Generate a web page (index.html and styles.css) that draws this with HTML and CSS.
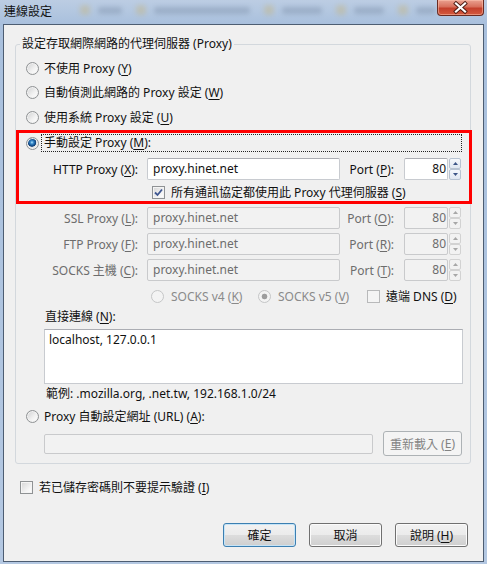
FILE: index.html
```html
<!DOCTYPE html>
<html lang="zh-Hant">

<head>
    <meta charset="UTF-8">
    <meta name="viewport" content="width=device-width, initial-scale=1.0">
    <link rel="stylesheet" href="styles.css">
    <title>連線設定</title>
</head>

<body>
    <div class="window">
        <div class="titlebar">
            <span class="title">連線設定</span>
            <span class="glass">
                <span class="blob icon"></span><span class="blob w1"></span>
                <span class="blob icon"></span><span class="blob w2"></span>
                <span class="blob icon"></span><span class="blob w3"></span>
                <span class="blob icon"></span><span class="blob w4"></span>
                <span class="blob icon"></span><span class="blob w5"></span>
            </span>
            <span class="close">
                <svg width="45" height="15" viewBox="0 0 45 15">
                    <path d="M18 3.5 L27 11.5 M27 3.5 L18 11.5" stroke="#4a1a12" stroke-width="4" stroke-linecap="square" />
                    <path d="M18 3.5 L27 11.5 M27 3.5 L18 11.5" stroke="#ffffff" stroke-width="2.2" stroke-linecap="square" />
                </svg>
            </span>
        </div>

        <div class="client">
            <fieldset class="group">
                <legend>設定存取網際網路的代理伺服器 (Proxy)</legend>

                <div class="opt"><span class="radio"></span><span>不使用 Proxy (<u>Y</u>)</span></div>
                <div class="opt"><span class="radio"></span><span>自動偵測此網路的 Proxy 設定 (<u>W</u>)</span></div>
                <div class="opt third"><span class="radio"></span><span>使用系統 Proxy 設定 (<u>U</u>)</span></div>

                <div class="highlight">
                    <div class="opt manual"><span class="radio checked"></span><span class="focus">手動設定 Proxy (<u>M</u>):</span></div>
                    <div class="proxy-row">
                        <span class="lbl">HTTP Proxy (<u>X</u>):</span>
                        <span class="field">proxy.hinet.net</span>
                        <span class="lbl">Port (<u>P</u>):</span>
                        <span class="spin">
                            <span class="field num">80</span>
                            <span class="arrows">
                                <span class="arrow"><svg width="5" height="3"><path d="M0 3 L2.5 0 L5 3 Z" fill="#3b5587" /></svg></span>
                                <span class="arrow"><svg width="5" height="3"><path d="M0 0 L5 0 L2.5 3 Z" fill="#3b5587" /></svg></span>
                            </span>
                        </span>
                    </div>
                    <div class="check-row share">
                        <span class="check">
                            <svg width="11" height="11" viewBox="0 0 11 11"><path d="M2 5.5 L4.5 8 L9 2.5" fill="none" stroke="#3e5690" stroke-width="1.8" /></svg>
                        </span>
                        <span>所有通訊協定都使用此 Proxy 代理伺服器 (<u>S</u>)</span>
                    </div>
                </div>

                <div class="proxy-row disabled first">
                    <span class="lbl">SSL Proxy (<u>L</u>):</span>
                    <span class="field">proxy.hinet.net</span>
                    <span class="lbl">Port (<u>O</u>):</span>
                    <span class="spin">
                        <span class="field num">80</span>
                        <span class="arrows">
                            <span class="arrow"><svg width="5" height="3"><path d="M0 3 L2.5 0 L5 3 Z" fill="#a7a7a7" /></svg></span>
                            <span class="arrow"><svg width="5" height="3"><path d="M0 0 L5 0 L2.5 3 Z" fill="#a7a7a7" /></svg></span>
                        </span>
                    </span>
                </div>
                <div class="proxy-row disabled">
                    <span class="lbl">FTP Proxy (<u>F</u>):</span>
                    <span class="field">proxy.hinet.net</span>
                    <span class="lbl">Port (<u>R</u>):</span>
                    <span class="spin">
                        <span class="field num">80</span>
                        <span class="arrows">
                            <span class="arrow"><svg width="5" height="3"><path d="M0 3 L2.5 0 L5 3 Z" fill="#a7a7a7" /></svg></span>
                            <span class="arrow"><svg width="5" height="3"><path d="M0 0 L5 0 L2.5 3 Z" fill="#a7a7a7" /></svg></span>
                        </span>
                    </span>
                </div>
                <div class="proxy-row disabled">
                    <span class="lbl">SOCKS 主機 (<u>C</u>):</span>
                    <span class="field">proxy.hinet.net</span>
                    <span class="lbl">Port (<u>T</u>):</span>
                    <span class="spin">
                        <span class="field num">80</span>
                        <span class="arrows">
                            <span class="arrow"><svg width="5" height="3"><path d="M0 3 L2.5 0 L5 3 Z" fill="#a7a7a7" /></svg></span>
                            <span class="arrow"><svg width="5" height="3"><path d="M0 0 L5 0 L2.5 3 Z" fill="#a7a7a7" /></svg></span>
                        </span>
                    </span>
                </div>

                <div class="socks-row">
                    <span class="sock-opt v4"><span class="radio off"></span><span>SOCKS v4 (<u>K</u>)</span></span>
                    <span class="sock-opt v5"><span class="radio off on"></span><span>SOCKS v5 (<u>V</u>)</span></span>
                    <span class="sock-opt dns"><span class="check off"></span><span>遠端 DNS (<u>D</u>)</span></span>
                </div>

                <div class="direct-label">直接連線 (<u>N</u>):</div>
                <div class="textarea">localhost, 127.0.0.1</div>
                <div class="hint">範例: .mozilla.org, .net.tw, 192.168.1.0/24</div>

                <div class="opt url-opt"><span class="radio"></span><span>Proxy 自動設定網址 (URL) (<u>A</u>):</span></div>
                <div class="url-row">
                    <span class="field url"></span>
                    <span class="btn off reload">重新載入 (<u>E</u>)</span>
                </div>
            </fieldset>

            <div class="check-row bottom-check">
                <span class="check"></span>
                <span>若已儲存密碼則不要提示驗證 (<u>I</u>)</span>
            </div>

            <div class="buttons">
                <span class="btn default">確定</span>
                <span class="btn">取消</span>
                <span class="btn">說明 (<u>H</u>)</span>
            </div>
        </div>
    </div>
</body>

</html>
```

FILE: styles.css
```css
body {
  margin: 0;
  width: 487px;
  height: 564px;
  overflow: hidden;
  background: linear-gradient(#bccde3, #a9c0dd 24px, #b4c8e2);
  font-family: "Noto Sans", "Noto Sans CJK TC", sans-serif;
  font-size: 12px;
  color: #111;
}

u {
  text-decoration-thickness: 1px;
  text-underline-offset: 2px;
}

.window {
  display: flex;
  flex-direction: column;
  height: 564px;
}

/* title bar */

.titlebar {
  height: 24px;
  display: flex;
  align-items: flex-start;
  flex: none;
}

.title {
  padding: 4px 0 0 4px;
  line-height: 16px;
}

.glass {
  flex: 1;
  display: flex;
  align-items: center;
  gap: 8px;
  height: 20px;
  padding-left: 22px;
  opacity: 0.35;
  filter: blur(2.5px);
}

.blob {
  height: 7px;
  border-radius: 3px;
  background: #6d7f99;
}

.blob.icon {
  width: 10px;
  height: 10px;
  background: #c9b06a;
  margin-left: 6px;
}

.w1 {
  width: 24px;
}

.w2 {
  width: 96px;
}

.w3 {
  width: 40px;
}

.w4 {
  width: 30px;
}

.w5 {
  width: 20px;
}

.close {
  flex: none;
  width: 45px;
  height: 15px;
  margin-right: 3px;
  border: 1px solid #6a2a20;
  border-top: 0;
  border-radius: 0 0 4px 4px;
  background: linear-gradient(#eaa190, #d8705c 45%, #c4402c 55%, #d45a3e);
  box-shadow: inset 0 0 0 1px rgba(255, 200, 180, 0.5);
}

.close svg {
  display: block;
}

/* client area */

.client {
  flex: 1;
  margin: 0 3px 2px;
  border: 1px solid #4d5d72;
  background: #f0f0f0;
  padding-top: 11px;
}

.group {
  margin: 0 0 0 11px;
  padding: 4px 0 7px;
  width: 456px;
  box-sizing: border-box;
  border: 1px solid #d3d8dd;
  border-radius: 3px;
  min-width: 0;
}

.group legend {
  margin-left: 4px;
  padding: 0 2px;
  line-height: 16px;
}

.opt {
  display: flex;
  align-items: center;
  height: 24px;
  padding-left: 10px;
}

.opt .radio {
  margin-right: 5px;
}

.third {
  margin-top: 1px;
}

/* radio & check */

.radio {
  flex: none;
  width: 13px;
  height: 13px;
  box-sizing: border-box;
  border-radius: 50%;
  border: 1px solid #8f9294;
  background: linear-gradient(135deg, #cfd0d1, #f3f3f3 60%, #ffffff);
  box-shadow: inset 0 0 0 1px #f2f2f2;
}

.radio.checked {
  background: radial-gradient(circle at 45% 40%, #b8e6fb 0, #3d8fcf 1.5px, #1a5a99 3px, #0e3f77 4px, #e4e4e4 4.6px, #f6f6f6);
}

.radio.off {
  border-color: #c5c6c7;
  background: #f3f3f3;
  box-shadow: none;
}

.radio.off.on {
  background: radial-gradient(circle, #9d9d9d 0, #9d9d9d 2.5px, #f3f3f3 3.2px);
}

.check {
  flex: none;
  width: 13px;
  height: 13px;
  box-sizing: border-box;
  border: 1px solid #8f9294;
  background: linear-gradient(135deg, #d5d5d5, #f6f6f6 70%, #ffffff);
  box-shadow: inset 0 0 0 1px #f4f4f4;
}

.check svg {
  display: block;
}

.check.off {
  border-color: #b8b9ba;
  background: #f4f4f4;
}

/* highlight box */

.highlight {
  margin-top: 1px;
  width: 456px;
  box-sizing: border-box;
  border: 3px solid #ff0000;
}

.manual {
  height: 20px;
  padding-left: 7px;
}

.manual .radio {
  margin-right: 2px;
}

.focus {
  flex: 1;
  height: 18px;
  box-sizing: border-box;
  margin-right: 7px;
  padding-left: 2px;
  border: 1px dotted #222;
  line-height: 16px;
}

/* proxy rows */

.proxy-row {
  display: grid;
  grid-template-columns: 131px 193px 64px 57px;
  align-items: center;
  height: 22px;
  margin-top: 4px;
}

.highlight .proxy-row {
  grid-template-columns: 128px 193px 64px 57px;
  margin-top: 5px;
}

.proxy-row.first {
  margin-top: 3px;
}

.lbl {
  text-align: right;
  padding-right: 9px;
  white-space: nowrap;
}

.proxy-row .lbl:nth-of-type(3) {
  padding-right: 10px;
}

.field {
  height: 22px;
  box-sizing: border-box;
  border: 1px solid #c8cbd0;
  border-top-color: #abadb3;
  border-radius: 2px;
  background: #fff;
  padding: 0 5px;
  line-height: 20px;
}

.spin {
  display: flex;
}

.num {
  width: 44px;
  text-align: right;
  padding-right: 1px;
}

.arrows {
  margin-left: 1px;
  width: 12px;
  display: flex;
  flex-direction: column;
}

.arrow {
  height: 11px;
  box-sizing: border-box;
  border: 1px solid #b7c3d2;
  border-radius: 2px;
  background: linear-gradient(#f5f8fc, #dfe7f1);
  display: flex;
  align-items: center;
  justify-content: center;
}

.arrow svg {
  display: block;
}

.disabled {
  color: #6d6d6d;
}

.disabled .field {
  background: #f2f2f2;
  border-color: #c9cacc;
  color: #6d6d6d;
}

.disabled .arrow {
  border-color: #d2d2d2;
  background: #f2f2f2;
}

.check-row {
  display: flex;
  align-items: center;
  height: 18px;
}

.check-row .check {
  margin-right: 6px;
}

.share {
  margin-top: 3px;
  padding-left: 133px;
}

/* socks */

.socks-row {
  display: flex;
  align-items: center;
  height: 22px;
  margin-top: 4px;
  padding-left: 135px;
  color: #8a8a8a;
}

.sock-opt {
  display: flex;
  align-items: center;
}

.sock-opt .radio {
  margin-right: 7px;
}

.sock-opt.v4 {
  width: 107px;
}

.sock-opt.v5 {
  width: 109px;
}

.sock-opt.dns {
  color: #111;
}

.sock-opt .check {
  margin-right: 6px;
}

/* no-proxy list */

.direct-label {
  margin-top: 1px;
  height: 18px;
  line-height: 18px;
  padding-left: 29px;
}

.textarea {
  margin: 3px 0 0 28px;
  width: 419px;
  height: 55px;
  box-sizing: border-box;
  border: 1px solid #c8cbd0;
  border-top-color: #abadb3;
  background: #fff;
  padding: 2px 4px;
  line-height: 16px;
}

.hint {
  margin-top: 2px;
  height: 16px;
  line-height: 16px;
  padding-left: 30px;
}

.url-opt {
  margin-top: 2px;
}

.url-row {
  display: flex;
  align-items: center;
  height: 25px;
  margin-top: 3px;
  padding-left: 28px;
}

.field.url {
  width: 329px;
  height: 20px;
  background: #f2f2f2;
  border-color: #c9cacc;
}

/* buttons */

.btn {
  display: flex;
  align-items: center;
  justify-content: center;
  width: 73px;
  height: 24px;
  box-sizing: border-box;
  border: 1px solid #707070;
  border-radius: 3px;
  background: linear-gradient(#f2f2f2, #ebebeb 50%, #dddddd 50%, #cfcfcf);
  box-shadow: inset 0 0 0 1px #fbfbfb;
}

.btn.default {
  border-color: #3c7fb1;
  box-shadow: inset 0 0 0 1px #c6e4f7;
}

.btn.off {
  color: #838383;
  border-color: #adb2b5;
  background: #f4f4f4;
  box-shadow: none;
}

.reload {
  margin-left: 10px;
  width: 79px;
  height: 25px;
}

.bottom-check {
  margin-top: 14px;
  padding-left: 16px;
}

.buttons {
  display: flex;
  justify-content: flex-end;
  gap: 13px;
  margin-top: 27px;
  padding-right: 15px;
}
```
